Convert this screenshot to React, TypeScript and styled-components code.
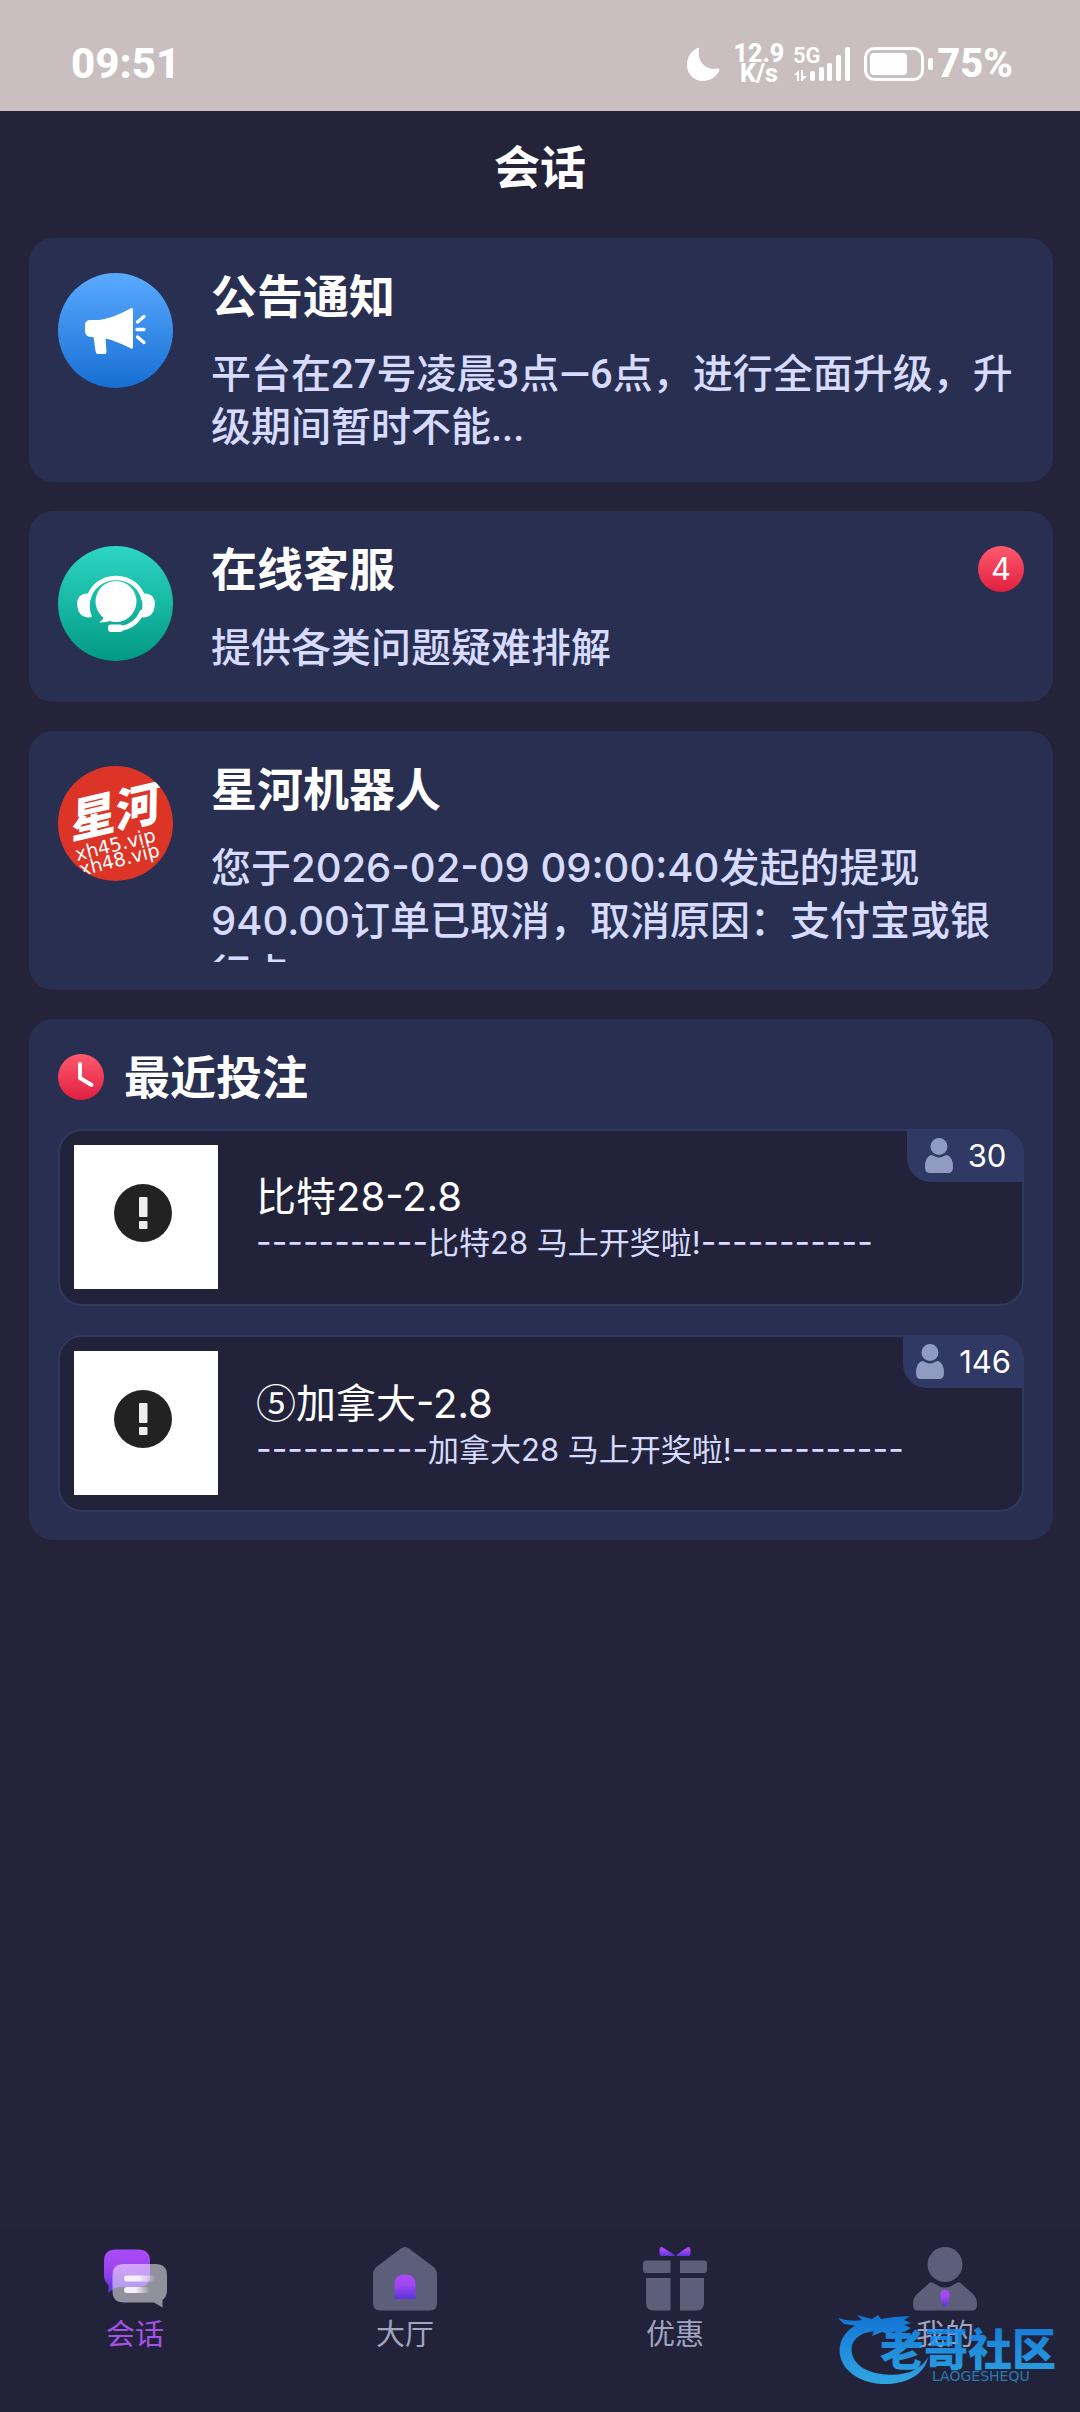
import React from "react";
import styled, { createGlobalStyle } from "styled-components";

const SANS = `Inter, "Noto Sans CJK SC", sans-serif`;
const SANS_NARROW = `Roboto, "Noto Sans CJK SC", sans-serif`;

const GlobalStyle = createGlobalStyle`
  *, *::before, *::after { box-sizing: border-box; }
  body { margin: 0; background: #252339; font-family: ${SANS}; color: #fff; }
  h1, h2, h3, p { margin: 0; }
  a { color: inherit; text-decoration: none; }
`;

const Page = styled.div`
  min-height: 100vh;
  display: flex;
  flex-direction: column;
`;

/* ---------- status bar ---------- */

const StatusBar = styled.div`
  display: flex;
  justify-content: space-between;
  padding: 45px 67px 28px 71px;
  background: #c9bfc0;
  font-family: Roboto, sans-serif;
  font-weight: 800;
`;

const StatusText = styled.span<{ $large?: boolean }>`
  font-size: ${(p) => (p.$large ? 42 : 40)}px;
  line-height: 38px;
`;

const StatusGroup = styled.div`
  display: flex;
  align-items: center;
  height: 38px;
`;

const Moon = styled.svg`
  display: block;
  width: 34px;
  height: 34px;
  margin-right: 14px;
`;

const NetSpeed = styled.span`
  display: flex;
  flex-direction: column;
  align-items: center;
  font-size: 25px;
  line-height: 20px;
  margin-right: 9px;
`;

const Signal = styled.svg`
  display: block;
  overflow: visible;
  width: 58px;
  height: 36px;
  margin-right: 13px;
`;

const Battery = styled.svg`
  display: block;
  width: 69px;
  height: 36px;
  margin-right: 4px;
`;

/* ---------- content ---------- */

const Header = styled.header`
  padding: 28px 0 43px;
  text-align: center;
`;

const PageTitle = styled.h1`
  font-size: 46px;
  line-height: 56px;
  font-weight: 700;
`;

const Main = styled.main`
  flex: 1;
  display: flex;
  flex-direction: column;
  gap: 29px;
  padding: 0 27px 29px 29px;
`;

const cardBox = `
  padding: 35px 29px 28px;
  border-radius: 24px;
  background: #292f50;
`;

const MessageCard = styled.a`
  ${cardBox}
  display: flex;
  align-items: flex-start;
  gap: 38px;
`;

const Avatar = styled.svg`
  display: block;
  flex: none;
  width: 115px;
  height: 115px;
  border-radius: 50%;
`;

const MessageBody = styled.div`
  flex: 1;
  min-width: 0;
  display: flex;
  flex-direction: column;
  gap: 29px;
`;

const MessageHead = styled.div`
  display: flex;
  align-items: center;
  justify-content: space-between;
`;

const Heading = styled.h2`
  font-size: 46px;
  line-height: 46px;
  font-weight: 700;
`;

const Unread = styled.span`
  min-width: 46px;
  height: 46px;
  border-radius: 23px;
  background: linear-gradient(#ff5a6e, #e01f3f);
  font-size: 31px;
  line-height: 46px;
  text-align: center;
`;

const Message = styled.p<{ $narrow?: boolean }>`
  max-height: 121px;
  overflow: hidden;
  font-family: ${(p) => (p.$narrow ? SANS_NARROW : SANS)};
  font-size: 40px;
  line-height: 53px;
  font-weight: 500;
  color: #d6dbff;
`;

const RecentCard = styled.section`
  ${cardBox}
  display: flex;
  flex-direction: column;
  gap: 29px;
`;

const RecentHead = styled.div`
  display: flex;
  align-items: center;
  gap: 20px;
`;

const Clock = styled.svg`
  display: block;
  width: 46px;
  height: 46px;
`;

const BetRow = styled.a`
  position: relative;
  display: flex;
  align-items: center;
  gap: 38px;
  padding: 14px 14px 15px;
  border: 2px solid #30395f;
  border-radius: 24px;
  background: #22233a;
`;

const Thumb = styled.svg`
  display: block;
  flex: none;
  width: 144px;
  height: 144px;
  background: #fff;
`;

const BetName = styled.h3`
  font-size: 40px;
  line-height: 50px;
  font-weight: 400;
`;

const BetMark = styled.span`
  font-family: "Noto Sans CJK SC", sans-serif;
`;

const BetNote = styled.p`
  font-size: 31px;
  line-height: 40px;
  color: #d6dbff;
`;

const Dashes = styled.span`
  font-size: 34px;
`;

const CountTag = styled.span`
  position: absolute;
  top: -2px;
  right: -2px;
  display: flex;
  align-items: center;
  justify-content: center;
  gap: 15px;
  min-width: 117px;
  height: 53px;
  padding: 0 13px;
  border-radius: 0 24px 0 24px;
  background: #303864;
  font-size: 31px;
  line-height: 53px;
`;

const PersonMark = styled.svg`
  display: block;
  width: 28px;
  height: 35px;
`;

/* ---------- tab bar ---------- */

const TabBar = styled.nav`
  position: relative;
  display: grid;
  grid-template-columns: repeat(4, 1fr);
  padding: 18px 0 57px;
  background: #22233a;
`;

const Tab = styled.a<{ $active?: boolean }>`
  display: flex;
  flex-direction: column;
  align-items: center;
  gap: 4px;
  font-size: 29px;
  line-height: 40px;
  font-weight: 400;
  color: ${(p) => (p.$active ? "#a352e6" : "#a0a4c0")};
`;

const TabIcon = styled.svg`
  display: block;
  width: 64px;
  height: 64px;
`;

const Watermark = styled.svg`
  position: absolute;
  right: 16px;
  bottom: 26px;
  width: 226px;
  height: 80px;
  opacity: 0.85;
  pointer-events: none;
`;

/* ---------- drawings ---------- */

const NoticeAvatar = () => (
  <Avatar viewBox="0 0 115 115" aria-hidden="true">
    <defs>
      <linearGradient id="notice" x2="0" y2="1">
        <stop stopColor="#5aaaff" />
        <stop offset="1" stopColor="#176fd3" />
      </linearGradient>
    </defs>
    <rect width="115" height="115" fill="url(#notice)" />
    <path
      fill="#fff"
      d="M33 47H41C52 46 64 40 73 35.300Q75 34.500 75 37V74Q75 76.500 73 75.500C64 71 55 67 47.500 65.500L48.500 79Q48.500 81 46.500 81H40Q38 81 37.700 79L35.500 64H33Q27 63.500 27 58V52Q27 47 33 47Z"
    />
    <path stroke="#fff" strokeWidth="3.400" strokeLinecap="round" d="M79.500 49L86 43.500M79 56.500H86M79.500 64L86 69.500" />
  </Avatar>
);

const ServiceAvatar = () => (
  <Avatar viewBox="0 0 115 115" aria-hidden="true">
    <defs>
      <linearGradient id="service" x2="0" y2="1">
        <stop stopColor="#2dd6c4" />
        <stop offset="1" stopColor="#029a84" />
      </linearGradient>
    </defs>
    <rect width="115" height="115" fill="url(#service)" />
    <g fill="#fff">
      <circle cx="58" cy="55.500" r="20.500" />
      <path d="M40 63L46 71Q45 74 41 76.500Q49 76.500 55 74Z" />
      <path d="M34 71Q24 73 20.500 65Q17.500 56 21 51Q24 47.500 29 47.500Q32 47.500 33 51Q30 61 34 71Z" />
      <path d="M82 71Q92 73 95.500 65Q98.500 56 95 51Q92 47.500 87 47.500Q84 47.500 83.500 51Q86 61 82 71Z" />
      <rect x="50" y="78.500" width="15" height="7.500" rx="3" />
    </g>
    <g fill="none" stroke="#fff" strokeWidth="4.500" strokeLinecap="round">
      <path d="M30.500 53A28 26 0 0 1 85.500 53" />
      <path d="M84 66Q78 80 63 82.500" />
    </g>
  </Avatar>
);

const RobotAvatar = () => (
  <Avatar viewBox="0 0 115 115" role="img" aria-label="星河">
    <rect width="115" height="115" fill="#dc3527" />
    <g fill="#fff">
      <text x="13" y="73" transform="rotate(-13 13 73)" fontSize="46" fontWeight="900" fontStyle="italic" fontFamily='"Noto Sans CJK SC", sans-serif'>
        星河
      </text>
      <text x="19" y="95" transform="rotate(-14 19 95)" fontSize="19" fontFamily='"DejaVu Sans", sans-serif'>
        xh45.vip
      </text>
      <text x="23" y="110" transform="rotate(-14 23 110)" fontSize="19" fontFamily='"DejaVu Sans", sans-serif'>
        xh48.vip
      </text>
    </g>
  </Avatar>
);

const ErrorThumb = () => (
  <Thumb viewBox="0 0 144 144" aria-hidden="true">
    <circle cx="69" cy="68" r="29" fill="#222" />
    <rect x="65" y="52" width="8.500" height="20" rx="1" fill="#eee" />
    <rect x="65" y="76" width="8.500" height="8" rx="1" fill="#eee" />
  </Thumb>
);

const Person = () => (
  <PersonMark viewBox="0 0 28 35" fill="#8f9bc0" aria-hidden="true">
    <circle cx="14" cy="8.500" r="8.500" />
    <path d="M6 17Q8 17 10 18.500Q14 20.500 18 18.500Q20 17 22 17Q28 19 28 29Q28 35 23 35H5Q0 35 0 29Q0 19 6 17Z" />
  </PersonMark>
);

const Purple = () => (
  <defs>
    <linearGradient id="purple" x2="0" y2="1">
      <stop stopColor="#a94bf8" />
      <stop offset="0.400" stopColor="#a246f2" />
      <stop offset="1" stopColor="#5c35dc" />
    </linearGradient>
    <linearGradient id="fade">
      <stop offset="0.450" stopColor="#f5f0fa" />
      <stop offset="1" stopColor="#f5f0fa" stopOpacity="0" />
    </linearGradient>
  </defs>
);

const ChatIcon = () => (
  <TabIcon viewBox="0 0 64 64" aria-hidden="true">
    <Purple />
    <path fill="url(#purple)" d="M13 2.500H35Q47 2.500 47 14V29Q47 40 35 40H16Q10 41 5.500 46V38Q1 34 1 29V14Q1 2.500 13 2.500Z" />
    <path
      fill="#fff"
      fillOpacity="0.500"
      d="M21 17H52Q64 17 64 28V43Q64 50 59.500 53V60.500L51 55.500H21Q9.500 55.500 9.500 44V28Q9.500 17 21 17Z"
    />
    <rect x="21" y="28.500" width="32" height="6" rx="3" fill="url(#fade)" />
    <rect x="21" y="40" width="26" height="6" rx="3" fill="url(#fade)" />
  </TabIcon>
);

const HomeIcon = () => (
  <TabIcon viewBox="0 0 64 64" aria-hidden="true">
    <path fill="#5d5e7a" d="M28 1.500Q32 -1.500 36 1.500L60 19.500Q64 23 64 27V56Q64 63.500 57 63.500H7Q0 63.500 0 56V27Q0 23 4 19.500Z" />
    <path fill="url(#purple)" d="M21.500 37Q21.500 27.500 32 27.500Q42.500 27.500 42.500 37V52H21.500Z" />
  </TabIcon>
);

const GiftIcon = () => (
  <TabIcon viewBox="0 0 64 64" aria-hidden="true">
    <g fill="url(#purple)">
      <path d="M16.500 2.500Q17 -1 20 0.500L31.500 8V9H18Q16.500 9 16.500 7Z" />
      <path d="M47.500 2.500Q47 -1 44 0.500L33.500 8V9H46Q47.500 9 47.500 7Z" />
    </g>
    <g fill="#5d5e7a">
      <path d="M3 13.500H27.500V26H3Q0 26 0 23V16.500Q0 13.500 3 13.500Z" />
      <path d="M61 13.500H37V26H61Q64 26 64 23V16.500Q64 13.500 61 13.500Z" />
      <path d="M3 31H27.500V63.500H11Q3 63.500 3 56Z" />
      <path d="M61 31H37V63.500H53Q61 63.500 61 56Z" />
    </g>
  </TabIcon>
);

const MineIcon = () => (
  <TabIcon viewBox="0 0 64 64" aria-hidden="true">
    <g fill="#5d5e7a">
      <circle cx="32" cy="17.500" r="17.500" />
      <path d="M17 35.500Q19 34.500 22 37Q32 44 42 37Q45 34.500 47 35.500L60 47Q64 51 64 57Q64 63.500 60 63.500H4Q0 63.500 0 57Q0 51 4 47Z" />
    </g>
    <path fill="url(#purple)" d="M27.500 46Q28.500 43 32 43Q35.500 43 36.500 46Q37 48 35 57Q34 59.500 32 59.500Q30 59.500 29 57Q27 48 27.500 46Z" />
  </TabIcon>
);

const CommunityMark = () => (
  <Watermark viewBox="0 0 226 80" role="img" aria-label="老哥社区">
    <defs>
      <linearGradient id="water" gradientUnits="userSpaceOnUse" x1="0" y1="10" x2="0" y2="78">
        <stop stopColor="#0f84f0" />
        <stop offset="1" stopColor="#34bcff" />
      </linearGradient>
    </defs>
    <g fill="url(#water)">
      <path d="M22 17C8 23 1 34 1.600 46C3 66 25 79 50 78C70 77 87 68 90 51C83 64 68 70 48 68.500C28 67 14 58 13.600 44C13 36 19 29 30 26L36 19Z" />
      <path d="M0 12Q12 16 24 14L19 9L34 13L40 9L43 13L56 11L72 10L66 14L73 17L66 19L73 22L66 26L58 25L50 28L44 26L34 30L36 25L27 27L31 21L20 20L6 18Z" />
      <text x="42" y="60" fontSize="44" fontWeight="900" fontFamily='"Noto Sans CJK SC", sans-serif'>
        老哥社区
      </text>
      <text x="94" y="75" fontSize="14" fontFamily='"DejaVu Sans", sans-serif' opacity="0.700">
        LAOGESHEQU
      </text>
    </g>
  </Watermark>
);

/* ---------- data ---------- */

const messages = [
  {
    title: "公告通知",
    text: "平台在27号凌晨3点—6点，进行全面升级，升级期间暂时不能...",
    narrow: true,
    avatar: <NoticeAvatar />,
  },
  { title: "在线客服", text: "提供各类问题疑难排解", unread: 4, avatar: <ServiceAvatar /> },
  {
    title: "星河机器人",
    text: "您于2026-02-09 09:00:40发起的提现940.00订单已取消，取消原因：支付宝或银行卡",
    avatar: <RobotAvatar />,
  },
];

const bets = [
  { name: "比特28-2.8", note: "比特28 马上开奖啦!", count: 30 },
  { mark: "⑤", name: "加拿大-2.8", note: "加拿大28 马上开奖啦!", count: 146 },
];

const tabs = [
  { label: "会话", icon: <ChatIcon /> },
  { label: "大厅", icon: <HomeIcon /> },
  { label: "优惠", icon: <GiftIcon /> },
  { label: "我的", icon: <MineIcon /> },
];

const DASHES = "-----------";

export default function App() {
  return (
    <Page>
      <GlobalStyle />
      <StatusBar>
        <StatusText $large>09:51</StatusText>
        <StatusGroup>
          <Moon viewBox="0 0 34 34" fill="#fff" aria-hidden="true">
            <path d="M11.500 1Q13.500 0 13 3C11 14 19 24 31 21.500Q34.500 21 33 24C30 30 24 34 17 34C8 34 1 27 1 18C1 10 5 4 11.500 1Z" />
          </Moon>
          <NetSpeed>
            <span>12.9</span>
            <span>K/s</span>
          </NetSpeed>
          <Signal viewBox="0 0 58 36" fill="#fff">
            <text x="0" y="17" fontSize="22" fontWeight="600" fontFamily="Roboto, sans-serif">
              5G
            </text>
            <path d="M1 29L6 24V35H4V29ZM8 24H10V30H14L9 35H8Z" />
            <rect x="17" y="25" width="5" height="10" rx="2" />
            <rect x="26" y="21" width="5" height="14" rx="2" />
            <rect x="34" y="17" width="5" height="18" rx="2" />
            <rect x="43" y="9" width="5" height="26" rx="2" />
            <rect x="52" y="1" width="5" height="34" rx="2" />
          </Signal>
          <Battery viewBox="0 0 69 36" aria-hidden="true">
            <rect x="1.500" y="2.500" width="57" height="31" rx="9" fill="none" stroke="#fff" strokeWidth="3" />
            <rect x="6" y="7" width="37" height="22" rx="4" fill="#fff" />
            <rect x="64" y="12" width="5" height="12" rx="2" fill="#fff" />
          </Battery>
          <StatusText>75%</StatusText>
        </StatusGroup>
      </StatusBar>

      <Header>
        <PageTitle>会话</PageTitle>
      </Header>

      <Main>
        {messages.map((m) => (
          <MessageCard href="#" key={m.title}>
            {m.avatar}
            <MessageBody>
              <MessageHead>
                <Heading>{m.title}</Heading>
                {m.unread && <Unread>{m.unread}</Unread>}
              </MessageHead>
              <Message $narrow={m.narrow}>{m.text}</Message>
            </MessageBody>
          </MessageCard>
        ))}

        <RecentCard>
          <RecentHead>
            <Clock viewBox="0 0 46 46" aria-hidden="true">
              <defs>
                <linearGradient id="clock" x2="0" y2="1">
                  <stop stopColor="#ff5a6e" />
                  <stop offset="1" stopColor="#e01f3f" />
                </linearGradient>
              </defs>
              <circle cx="23" cy="23" r="23" fill="url(#clock)" />
              <path d="M22 10V24L33.500 31" fill="none" stroke="#fff" strokeWidth="4" strokeLinecap="round" strokeLinejoin="round" />
            </Clock>
            <Heading>最近投注</Heading>
          </RecentHead>
          {bets.map((b) => (
            <BetRow href="#" key={b.name}>
              <ErrorThumb />
              <div>
                <BetName>
                  {b.mark && <BetMark>{b.mark}</BetMark>}
                  {b.name}
                </BetName>
                <BetNote>
                  <Dashes>{DASHES}</Dashes>
                  {b.note}
                  <Dashes>{DASHES}</Dashes>
                </BetNote>
              </div>
              <CountTag>
                <Person />
                {b.count}
              </CountTag>
            </BetRow>
          ))}
        </RecentCard>
      </Main>

      <TabBar>
        {tabs.map((t, i) => (
          <Tab href="#" key={t.label} $active={i === 0} aria-current={i === 0 ? "page" : undefined}>
            {t.icon}
            <span>{t.label}</span>
          </Tab>
        ))}
        <CommunityMark />
      </TabBar>
    </Page>
  );
}
